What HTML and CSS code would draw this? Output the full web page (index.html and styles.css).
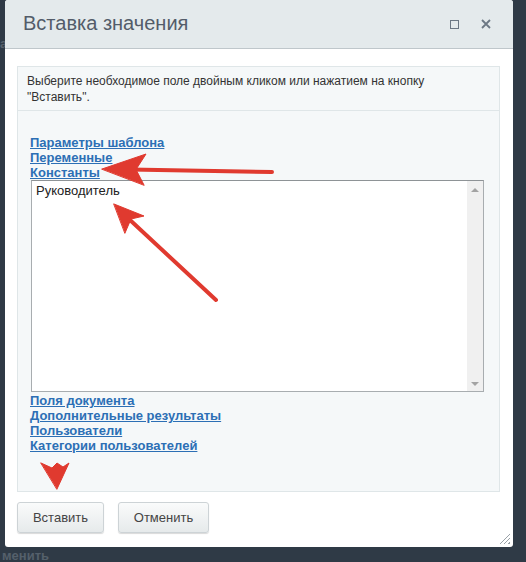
FILE: index.html
```html
<!DOCTYPE html>
<html lang="ru">
<head>
    <meta charset="UTF-8">
    <title>Вставка значения</title>
    <link rel="stylesheet" href="styles.css">
</head>
<body>

<div class="backdrop">
    <span class="bg-text bg-a">а</span>
    <span class="bg-text bg-b">менить</span>
</div>

<div class="dialog">
    <div class="dialog-head">
        <span class="dialog-title">Вставка значения</span>
        <span class="head-icons">
            <span class="icon-max"></span>
            <svg class="icon-close" width="10" height="10" viewBox="0 0 10 10">
                <path d="M1 1 L9 9 M9 1 L1 9" stroke="#6c7884" stroke-width="1.8"/>
            </svg>
        </span>
    </div>

    <div class="dialog-body">
        <div class="panel">
            <div class="info">Выберите необходимое поле двойным кликом или нажатием на кнопку "Вставить".</div>
            <div class="tree">
                <a href="#">Параметры шаблона</a>
                <a href="#">Переменные</a>
                <a href="#">Константы</a>
                <div class="listbox">
                    <div class="list-items">
                        <div>Руководитель</div>
                    </div>
                    <div class="scroll">
                        <span class="arr-up"></span>
                        <span class="arr-down"></span>
                    </div>
                </div>
                <a href="#">Поля документа</a>
                <a href="#">Дополнительные результаты</a>
                <a href="#">Пользователи</a>
                <a href="#">Категории пользователей</a>
            </div>
        </div>

        <div class="buttons">
            <button class="btn">Вставить</button>
            <button class="btn">Отменить</button>
        </div>
    </div>
    <span class="grip"></span>
</div>

<!-- красные стрелки поверх окна -->
<svg class="arrows" width="526" height="562" viewBox="0 0 526 562">
    <g fill="#e03a2f" stroke="#e03a2f" stroke-linecap="round">
        <path d="M272 172 L130 169.5" stroke-width="4" fill="none"/>
        <path d="M102 169 L146 154 L136 169.5 L144 185 Z" stroke-width="1"/>
        <path d="M216 300 L130 220" stroke-width="4" fill="none"/>
        <path d="M114 204 L144 216 L131 219 L125 233 Z" stroke-width="1"/>
        <path d="M41 463 L52 468 L57 463 L63 467 L69 463 L57 489 Z" stroke-width="1"/>
    </g>
</svg>

</body>
</html>
```

FILE: styles.css
```css
body {
    margin: 0;
    width: 526px;
    height: 562px;
    overflow: hidden;
    background-color: #2f3a46;
    font-family: "Liberation Sans", Arial, sans-serif;
    position: relative;
}

.backdrop {
    position: absolute;
    left: 0;
    top: 0;
    width: 526px;
    height: 562px;
}

.bg-text {
    position: absolute;
    color: #55606b;
    font-size: 13px;
    font-weight: bold;
}

.bg-a {
    left: 0;
    top: 36px;
}

.bg-b {
    left: 2px;
    top: 548px;
}

.dialog {
    position: relative;
    margin-left: 5px;
    width: 508px;
    height: 547px;
    background-color: #fff;
    border-radius: 3px;
    display: flex;
    flex-direction: column;
}

.dialog-head {
    height: 48px;
    background-color: #e4eaec;
    border-bottom: 1px solid #bfc7cb;
    border-radius: 3px 3px 0 0;
    display: flex;
    align-items: center;
    justify-content: space-between;
    padding: 0 22px 0 18px;
}

.dialog-title {
    font-family: "Liberation Sans", Arial, sans-serif;
    font-size: 20px;
    color: #535c69;
    margin-top: -2px;
}

.head-icons {
    display: flex;
    align-items: center;
    gap: 22px;
}

.icon-max {
    width: 7px;
    height: 7px;
    border: 1.5px solid #6c7884;
}

.dialog-body {
    padding: 17px 13px 0 12px;
}

.panel {
    border: 1px solid #dfe6e8;
    background-color: #f5f8f9;
}

.info {
    font-size: 12px;
    line-height: 16px;
    color: #333;
    padding: 6px 9px 5px 9px;
    height: 32px;
    border-bottom: 1px solid #dfe6e8;
}

.tree {
    padding: 24px 12px 38px 12px;
}

.tree a {
    display: block;
    color: #2c6fb5;
    font-size: 13px;
    font-weight: bold;
    line-height: 15px;
    text-decoration: underline;
}

.listbox {
    display: flex;
    width: 451px;
    height: 210px;
    margin: 0 0 1px 1px;
    background-color: #fff;
    border: 1px solid #a8adb0;
    border-top-color: #8e9396;
}

.list-items {
    flex: 1;
    padding: 2px 4px;
    font-size: 13px;
    line-height: 16px;
    color: #222;
}

.scroll {
    width: 16px;
    background-color: #f0f0f0;
    display: flex;
    flex-direction: column;
    justify-content: space-between;
    align-items: center;
    padding: 7px 0 5px 0;
}

.arr-up {
    width: 0;
    height: 0;
    border-left: 4px solid transparent;
    border-right: 4px solid transparent;
    border-bottom: 4px solid #a3a3a3;
}

.arr-down {
    width: 0;
    height: 0;
    border-left: 4px solid transparent;
    border-right: 4px solid transparent;
    border-top: 4px solid #a3a3a3;
}

.buttons {
    display: flex;
    gap: 14px;
    margin-top: 10px;
}

.btn {
    font-family: "Liberation Sans", Arial, sans-serif;
    font-size: 13px;
    color: #444;
    height: 31px;
    padding: 0 13px;
    border: 1px solid #cdd3d6;
    border-radius: 3px;
    background: linear-gradient(#fafbfb, #e6eaeb);
    box-shadow: 0 1px 1px rgba(0, 0, 0, 0.15);
}

.btn:first-child {
    width: 87px;
}

.btn:last-child {
    width: 91px;
}

.grip {
    position: absolute;
    right: 3px;
    bottom: 3px;
    width: 11px;
    height: 11px;
    background: repeating-linear-gradient(135deg, transparent 0 2px, #9aa2a8 2px 3px);
    clip-path: polygon(100% 0, 100% 100%, 0 100%);
}

.arrows {
    position: absolute;
    left: 0;
    top: 0;
}
```
